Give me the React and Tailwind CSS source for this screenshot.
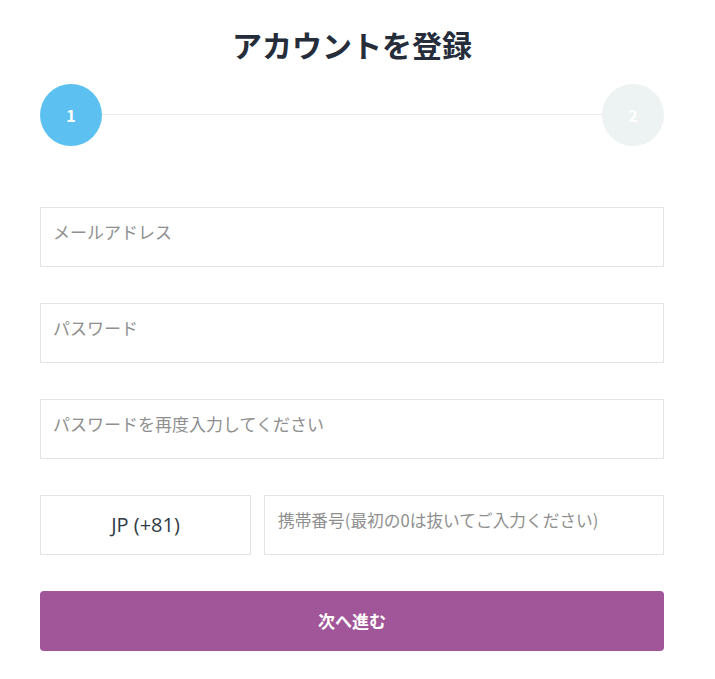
import React from "react";

const font = { fontFamily: '"Noto Sans CJK JP", "Noto Sans", sans-serif' };

function Field({ placeholder, className = "" }) {
  return (
    <div className={`h-[60px] border border-[#e3e3e3] bg-white pl-[12px] pt-[12px] ${className}`}>
      <span className="text-[17px] leading-[24px] text-[#8f8f8f]">{placeholder}</span>
    </div>
  );
}

export default function App() {
  return (
    <div className="min-h-[679px] w-[715px] bg-white" style={font}>
      <div className="ml-[40px] w-[624px]">
        <h1 className="pt-[24px] text-center text-[30px] font-bold leading-[40px] text-[#252d3b]">
          アカウントを登録
        </h1>
        <div className="relative mt-[20px] flex h-[62px] items-center justify-between">
          <div className="absolute left-[60px] right-[60px] top-[30px] h-[1px] bg-[#e9efef]" />
          <div className="relative z-10 flex h-[62px] w-[62px] items-center justify-center rounded-full bg-[#5cc1f1] text-[16px] font-bold text-white">
            1
          </div>
          <div className="relative z-10 flex h-[62px] w-[62px] items-center justify-center rounded-full bg-[#edf3f2] text-[16px] font-bold text-white">
            2
          </div>
        </div>
        <div className="mt-[61px] flex flex-col gap-[36px]">
          <Field placeholder="メールアドレス" />
          <Field placeholder="パスワード" />
          <Field placeholder="パスワードを再度入力してください" />
          <div className="flex gap-[13px]">
            <div
              className="flex h-[60px] w-[211px] items-center justify-center border border-[#e3e3e3] text-[20px] text-[#2f3a45]"
              style={{ fontFamily: '"Open Sans", "Noto Sans", sans-serif' }}
            >
              JP (+81)
            </div>
            <div className="h-[60px] flex-1 border border-[#e3e3e3] pl-[13px] pt-[12px]">
              <span className="text-[16.7px] leading-[24px] text-[#8f8f8f]">
                携帯番号(最初の0は抜いてご入力ください)
              </span>
            </div>
          </div>
          <button className="h-[60px] w-full rounded-[4px] bg-[#a05698] text-[17px] font-bold text-white">
            次へ進む
          </button>
        </div>
      </div>
    </div>
  );
}
